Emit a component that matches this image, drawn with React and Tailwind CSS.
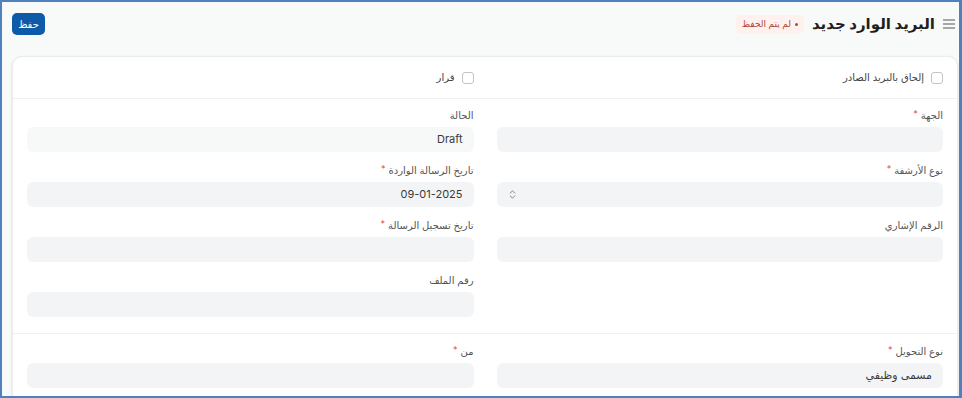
import { ChevronsUpDown } from "lucide-react";

const Field = ({ label, required, value, muted, select, ltr }) => (
  <div className="flex flex-col">
    <div className="flex items-center gap-[3px] h-[14px] text-[10px] leading-[14px] text-[#555] mb-[5px]">
      <span>{label}</span>
      {required && <span className="text-[#e24c4c] text-[9px] leading-none -mt-[3px]">*</span>}
    </div>
    <div
      className={`h-[25px] rounded-[6px] px-[11px] flex items-center text-[11px] text-[#3a3a3a] ${
        muted ? "bg-[#f7f8f8]" : "bg-[#f3f4f6]"
      }`}
    >
      {value && <span dir={ltr ? "ltr" : undefined}>{value}</span>}
      {select && (
        <ChevronsUpDown size={11} strokeWidth={1.5} className="mr-auto -ml-[1px] text-[#555]" />
      )}
    </div>
  </div>
);

const Check = ({ label }) => (
  <label className="flex items-center gap-[7px] text-[10px] text-[#444]">
    <span className="w-[12px] h-[12px] rounded-[3px] border border-[#c4c4c4] bg-white" />
    <span>{label}</span>
  </label>
);

export default function App() {
  return (
    <div
      dir="rtl"
      className="w-[962px] h-[398px] overflow-hidden border-2 border-r-[3px] border-[#4f81bd] bg-[#f8f9f9]"
      style={{ fontFamily: 'Inter, "DejaVu Sans", sans-serif' }}
    >
      {/* Header */}
      <div className="h-[44px] flex items-center justify-between pr-[4px] pl-[10px]">
        <div className="flex items-center gap-[8px]">
          <svg width="12" height="10" viewBox="0 0 12 10" className="text-[#8a8a8a]">
            <path d="M0 1h12M0 5h12M0 9h12" stroke="currentColor" strokeWidth="1.4" />
          </svg>
          <h1 className="text-[15px] font-bold text-[#1f1f1f]">البريد الوارد جديد</h1>
          <span className="flex items-center gap-[4px] h-[19px] px-[6px] rounded-[5px] bg-[#fff1ee] text-[9px] text-[#b4463b]">
            <span className="w-[3px] h-[3px] rounded-full bg-[#b4463b]" />
            لم يتم الحفظ
          </span>
        </div>
        <button className="w-[33px] h-[22px] rounded-[5px] bg-[#0d5aa8] text-white text-[10px]">
          حفظ
        </button>
      </div>

      {/* Card */}
      <div className="mt-[10px] ml-[10px] mr-[1px] rounded-[10px] border border-[#ebebeb] bg-white shadow-sm">
        <div className="h-[41px] px-[14px] grid grid-cols-2 gap-x-[23px] items-center">
          <Check label="إلحاق بالبريد الصادر" />
          <Check label="قرار" />
        </div>

        <div className="border-t border-[#f0f0f0] px-[14px] pt-[9px] pb-[16px] grid grid-cols-2 gap-x-[23px]">
          <div className="flex flex-col gap-[11px]">
            <Field label="الجهة" required />
            <Field label="نوع الأرشفة" required select />
            <Field label="الرقم الإشاري" />
          </div>
          <div className="flex flex-col gap-[11px]">
            <Field label="الحالة" value="Draft" muted />
            <Field label="تاريخ الرسالة الواردة" required value="09-01-2025" ltr />
            <Field label="تاريخ تسجيل الرسالة" required />
            <Field label="رقم الملف" />
          </div>
        </div>

        <div className="border-t border-[#f0f0f0] px-[14px] pt-[10px] pb-[16px] grid grid-cols-2 gap-x-[23px]">
          <Field label="نوع التحويل" required value="مسمى وظيفي" />
          <Field label="من" required />
        </div>
      </div>
    </div>
  );
}
